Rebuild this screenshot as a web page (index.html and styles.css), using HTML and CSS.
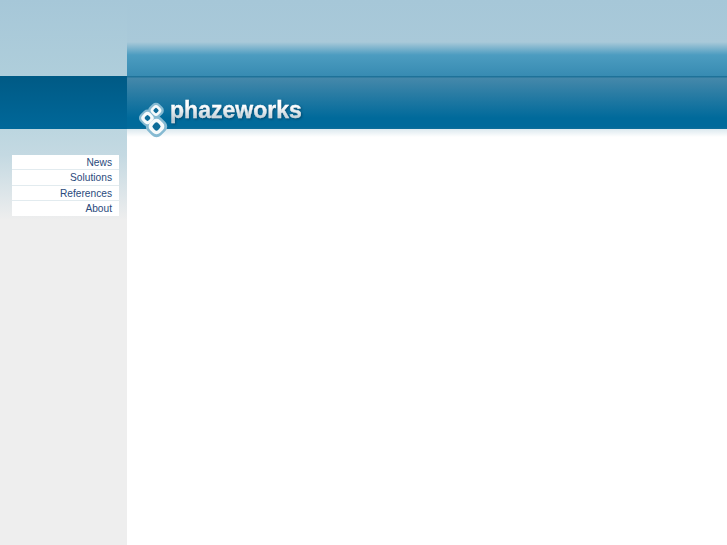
FILE: index.html
```html
<!DOCTYPE html>
<html lang="en">
<head>
<meta charset="utf-8">
<title>phazeworks</title>
<link rel="stylesheet" href="styles.css">
</head>
<body>
<div class="page">
  <aside class="sidebar">
    <nav class="menu">
      <a href="#">News</a>
      <a href="#">Solutions</a>
      <a href="#">References</a>
      <a href="#">About</a>
    </nav>
  </aside>
  <main class="main">
    <header class="banner">
      <div class="logo">
        <svg class="mark" width="34" height="38" viewBox="0 0 34 38" aria-hidden="true">
          <defs>
            <filter id="glow" x="-30%" y="-30%" width="160%" height="160%"><feGaussianBlur stdDeviation="0.7"/></filter>
            <filter id="soft" x="-20%" y="-20%" width="140%" height="140%"><feGaussianBlur stdDeviation="0.3"/></filter>
          </defs>
          <g fill="#86bad2" filter="url(#glow)">
            <rect x="12" y="1.500" width="14" height="14" rx="5" transform="rotate(45 19 8.500)"/>
            <rect x="3" y="8.500" width="15" height="15" rx="5" transform="rotate(45 10.500 16)"/>
            <rect x="10" y="15" width="19" height="19" rx="6.500" transform="rotate(45 19.500 24.500)"/>
          </g>
          <g fill="#f6fafb" filter="url(#soft)">
            <rect x="14.250" y="3.750" width="9.500" height="9.500" rx="3.500" transform="rotate(45 19 8.500)"/>
            <rect x="5" y="10.500" width="11" height="11" rx="4" transform="rotate(45 10.500 16)"/>
            <rect x="12.500" y="17.500" width="14" height="14" rx="5" transform="rotate(45 19.500 24.500)"/>
          </g>
          <g fill="#0c6c99" filter="url(#soft)">
            <rect x="16.750" y="6.250" width="4.500" height="4.500" rx="1.500" transform="rotate(45 19 8.500)"/>
            <rect x="8" y="13.500" width="5" height="5" rx="1.700" transform="rotate(45 10.500 16)"/>
            <rect x="16" y="21" width="7" height="7" rx="2.200" transform="rotate(45 19.500 24.500)"/>
          </g>
        </svg>
        <span class="wordmark">phazeworks</span>
      </div>
    </header>
  </main>
</div>
</body>
</html>
```
FILE: styles.css
```css
html, body {
  margin: 0;
  padding: 0;
  background: #fff;
}
.page {
  display: grid;
  grid-template-columns: 127px 1fr;
  height: 545px;
  overflow: hidden;
  font-family: "Liberation Sans", Arial, sans-serif;
}
.sidebar {
  box-sizing: border-box;
  padding: 155px 8px 0 12px;
  background:
    linear-gradient(to bottom,
      #a6c7d8 0, #afcedb 76px,
      #005a85 76px, #00689a 129px,
      #bcd6e0 129px, #c4d9e2 155px, #eeeeee 220px, #eeeeee 100%);
}
.menu {
  display: flex;
  flex-direction: column;
  background: #fff;
}
.menu a {
  display: block;
  height: 15.25px;
  box-sizing: border-box;
  padding: 1px 7px 0 0;
  border-bottom: 1px solid #e2ebef;
  font-size: 10.2px;
  line-height: 13px;
  text-align: right;
  text-decoration: none;
  color: #2a4a7c;
}
.menu a:last-child {
  border-bottom: 0;
}
.main {
  min-width: 0;
}
.banner {
  box-sizing: border-box;
  height: 138px;
  padding: 98px 0 0 10px;
  background:
    linear-gradient(to bottom,
      #a6c7d8 0, #a9c9d9 42px,
      #4c9cc0 55px, #378bb2 76px,
      #1e7299 76px, #1e7299 77px,
      #4588aa 78px, #006a9b 118px, #006a9b 127px, #0f6f9b 129px,
      #dce9ef 129px, #fff 137px);
}
.logo {
  display: flex;
  align-items: flex-start;
}
.mark {
  flex: none;
  margin-top: 4px;
}
.wordmark {
  margin: -2px 0 0 -1px;
  font-size: 23px;
  font-weight: 700;
  line-height: 28px;
  letter-spacing: 0.02px;
  background: linear-gradient(to bottom, #fff 35%, #bccad2 85%);
  -webkit-background-clip: text;
  background-clip: text;
  color: transparent;
  -webkit-text-stroke: 0.4px rgba(255, 255, 255, 0.35);
  filter: blur(0.3px) drop-shadow(1px 1px 1px rgba(0, 50, 80, 0.6));
}
```
